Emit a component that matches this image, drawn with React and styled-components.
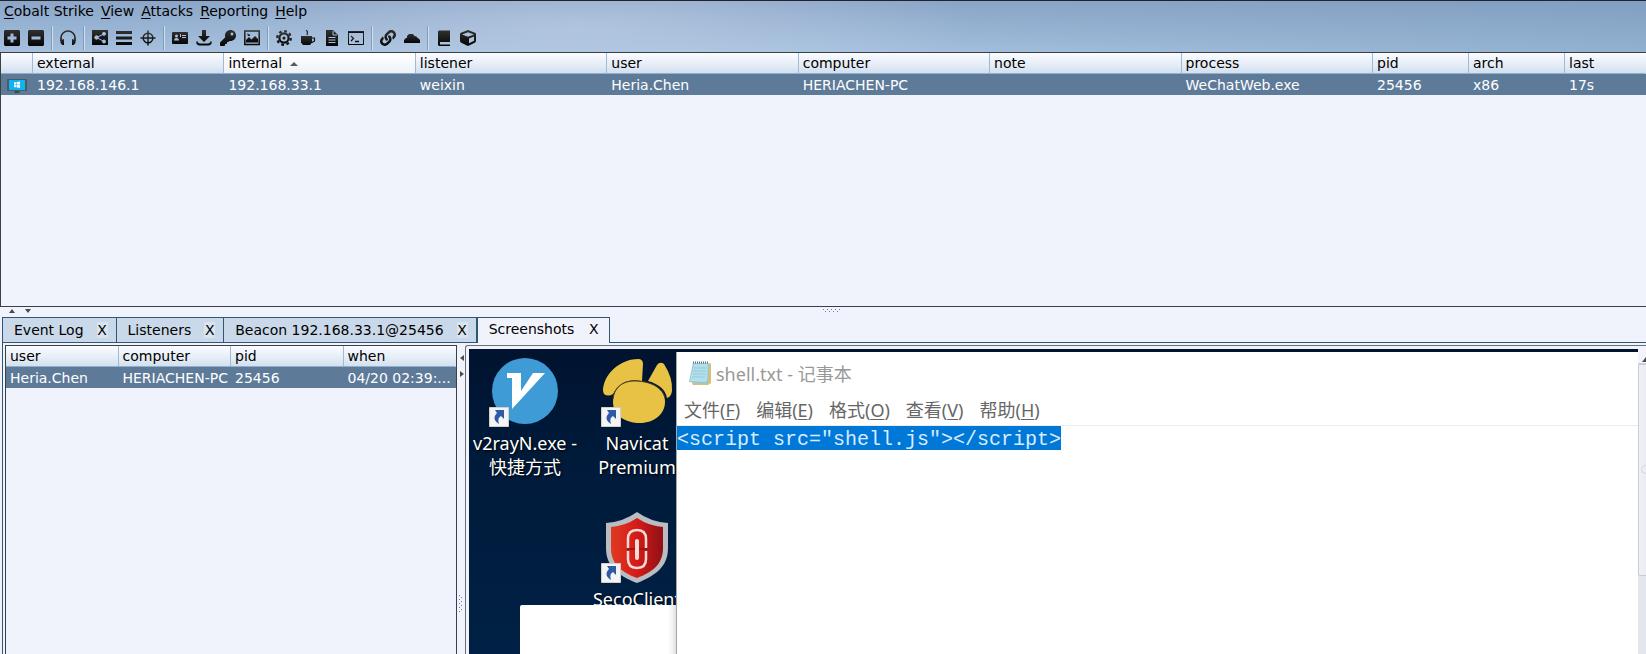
import React from "react";
import styled, { createGlobalStyle } from "styled-components";
import { FaKey, FaLink, FaCube } from "react-icons/fa";

const Global = createGlobalStyle`
  *, *::before, *::after { box-sizing: border-box; }
  html, body { margin: 0; padding: 0; }
  body, button { font-family: "DejaVu Sans", sans-serif; font-size: 14px; color: #000; }
  button { border: 0; padding: 0; margin: 0; background: none; cursor: pointer; }
`;

const Shell = styled.div`
  display: grid;
  grid-template-rows: auto minmax(0, 255fr) 10px minmax(0, 337fr);
  grid-template-columns: minmax(0, 1fr);
  height: 100vh;
  overflow: hidden;
  background: #f0f3fb;
`;

const Banner = styled.header`
  border-top: 1px solid #23232b;
  background:
    radial-gradient(ellipse 24% 150% at 35% 50%, rgba(200, 212, 232, 0.5), rgba(200, 212, 232, 0)),
    linear-gradient(90deg, rgba(110, 145, 180, 0) 50%, rgba(110, 145, 180, 0.35) 100%),
    linear-gradient(180deg, #8ba6c8 0%, #a5c1de 100%);
`;

const MenuBar = styled.nav`
  display: flex;
  align-items: flex-start;
  gap: 7px;
  height: 23px;
  padding: 0 4px;
`;

const MenuButton = styled.button`
  line-height: 21px;
`;

const Mnemonic = styled.span`
  text-decoration: underline;
  text-underline-offset: 2px;
`;

const ToolBar = styled.div`
  display: flex;
  align-items: center;
  height: 28px;
`;

const ToolButton = styled.button`
  display: grid;
  place-items: center;
  width: 24px;
  height: 24px;
  svg { width: 16px; height: 16px; }
`;

const ToolSeparator = styled.span`
  width: 8px;
  height: 24px;
  background: linear-gradient(90deg, #7f9bbb, #7f9bbb 50%, #d3e0ee 50%) center / 2px 100% no-repeat;
`;

const TablePane = styled.div`
  overflow: hidden;
  border: solid #3c3f44;
  border-width: ${(p) => (p.$inner ? "1px 1px 0" : "1px 0 1px 1px")};
`;

const Grid = styled.table`
  width: 100%;
  table-layout: fixed;
  border-collapse: separate;
  border-spacing: 0;
`;

const HeadCell = styled.th`
  height: 21px;
  padding: 0 4px;
  text-align: left;
  font-weight: normal;
  line-height: 20px;
  white-space: nowrap;
  border-right: 1px solid #9dbbd9;
  border-bottom: 1px solid #8fafcd;
  background: ${(p) =>
    p.$sorted
      ? "linear-gradient(#ffffff, #eef3f9)"
      : "linear-gradient(#fafcff 0%, #e9eff8 50%, #d3e0ee 100%)"};
  &:last-child { border-right-color: transparent; }
`;

const SortMark = styled.span`
  display: inline-block;
  margin-left: 8px;
  vertical-align: middle;
  border: solid transparent;
  border-width: 0 4px 4px;
  border-bottom-color: #555b64;
`;

const Cell = styled.td`
  height: 21px;
  padding: 2px 4px 0;
  line-height: 19px;
  color: #fff;
  background: #5e7a99;
  white-space: nowrap;
  svg { display: block; margin: 0 auto; }
`;

const SplitBar = styled.div`
  position: relative;
  display: flex;
  flex-direction: ${(p) => (p.$vertical ? "column" : "row")};
  align-items: flex-start;
  gap: 8px;
  padding: ${(p) => (p.$vertical ? "9px 1px" : "0 8px")};
`;

const Arrow = styled.button`
  display: block;
  width: 8px;
  height: 8px;
  svg { display: block; }
`;

const Grip = styled.svg`
  position: absolute;
  left: ${(p) => (p.$vertical ? "2px" : "50%")};
  top: ${(p) => (p.$vertical ? "81%" : "2px")};
`;

const Workspace = styled.section`
  display: flex;
  flex-direction: column;
  min-width: 0;
  padding-left: 2px;
`;

const TabStrip = styled.div`
  display: flex;
  height: 26px;
  border-left: 1px solid #2f5577;
  &::after {
    content: "";
    flex: 1;
    border-bottom: 1px solid #2f5577;
  }
`;

const Tab = styled.div`
  display: flex;
  align-items: center;
  gap: ${(p) => (p.$active ? "14px" : "13px")};
  padding: ${(p) => (p.$active ? "0 10px 4px 11px" : "0 8px 0 11px")};
  border: solid #2f5577;
  border-width: ${(p) => (p.$active ? "1px 1px 0 1px" : "1px 1px 1px 0")};
  background: ${(p) => (p.$active ? "#f0f3fb" : "#cad9e9")};
`;

const TabTitle = styled.button`
  line-height: 20px;
  white-space: nowrap;
`;

const TabClose = styled.button`
  width: 11px;
  line-height: 16px;
  background: ${(p) => (p.$active ? "transparent" : "#dae4ef")};
`;

const Panels = styled.div`
  flex: 1;
  min-height: 0;
  display: grid;
  grid-template-columns: minmax(0, 452fr) 8px minmax(0, 1181fr);
  padding: 2px 0 0 2px;
  border-left: 1px solid #2f5577;
`;

const Viewer = styled.div`
  display: grid;
  grid-template-columns: minmax(0, 1fr) 8px;
  padding: 3px 0 0 3px;
  border: solid #6b6e75;
  border-width: 1px 0 0 1px;
  border-radius: 3px 0 0 0;
  min-height: 0;
`;

const Desktop = styled.div`
  position: relative;
  overflow: hidden;
  background: linear-gradient(180deg, #00132f 0%, #001a3a 35%, #002145 100%);
  font-family: "Noto Sans", "Noto Sans CJK SC", sans-serif;
`;

const Shortcuts = styled.div`
  display: grid;
  grid-template-columns: repeat(2, 112px);
  grid-auto-rows: 156px;
  padding-top: 7px;
`;

const Shortcut = styled.div`
  display: flex;
  flex-direction: column;
  align-items: center;
  gap: 3px;
  grid-column: ${(p) => p.$column};
`;

const ShortcutLabel = styled.span`
  font-size: 18px;
  line-height: 24px;
  text-align: center;
  white-space: pre;
  color: #fff;
  text-shadow: 1px 1px 2px #000;
`;

const BlankWindow = styled.div`
  position: absolute;
  left: 51px;
  top: 256px;
  bottom: 0;
  width: 157px;
  border-radius: 2px 0 0 0;
  background: linear-gradient(270deg, #dadada 0, #f4f4f4 5px, #fff 10px);
`;

const Notepad = styled.div`
  position: absolute;
  left: 207px;
  top: 3px;
  right: 0;
  bottom: 0;
  background: #fff;
  border-left: 1px solid #a4a8ac;
`;

const NotepadTitle = styled.div`
  display: flex;
  align-items: center;
  gap: 4px;
  height: 42px;
  padding-left: 11px;
  font-size: 18px;
  color: #999;
`;

const NotepadMenu = styled.div`
  display: flex;
  gap: 16px;
  height: 32px;
  padding-left: 7px;
  border-bottom: 1px solid #ececec;
`;

const NotepadMenuButton = styled.button`
  font-family: "Noto Sans", "Noto Sans CJK SC", sans-serif;
  font-size: 18px;
  line-height: 32px;
  color: #666;
  white-space: nowrap;
`;

const Source = styled.code`
  display: block;
  width: max-content;
  padding-top: 4px;
  font-family: "Liberation Mono", monospace;
  font-size: 20px;
  line-height: 20px;
  color: #d9ecff;
  background: #0078d7;
`;

const ScrollTrack = styled.div`
  display: flex;
  flex-direction: column;
  overflow: hidden;
  background: #e4e6ed;
`;

const ScrollUp = styled.button`
  flex: none;
  height: 15px;
  padding-left: 4px;
  background: #f3f4f9;
  border-bottom: 1px solid #d0d2da;
`;

const ScrollThumb = styled.div`
  position: relative;
  flex: 0 1 212px;
  width: 15px;
  border: 1px solid #c9cbd3;
  border-radius: 2px;
  background: linear-gradient(90deg, #f0f1f6, #e8e9ef);
  &::after {
    content: "";
    position: absolute;
    left: 2px;
    top: 100px;
    width: 9px;
    height: 9px;
    border: 1px solid #d5d6dc;
    border-radius: 50%;
  }
`;

const ink = "url(#ink)";
const line = { fill: "none", stroke: ink };
const art = {
  add: <path fillRule="evenodd" d="M1 0h14l1 1v14l-1 1H1l-1-1V1zM6.500 3.500v3h-3v3h3v3h3v-3h3v-3h-3v-3z" />,
  remove: <path fillRule="evenodd" d="M1 0h14l1 1v14l-1 1H1l-1-1V1zM3.500 6.500v3h9v-3z" />,
  headphones: (
    <>
      <path d="M1 11V8a7 7 0 0 1 14 0v3" {...line} strokeWidth="1.500" />
      <path d="M.5 10 4 9v6L2.500 15 .5 13zM15.500 10 12 9v6l1.500 0 2-2z" />
    </>
  ),
  graph: (
    <>
      <rect x="0" y="0" width="16" height="15" />
      <g fill="#a5bfdc" stroke="#a5bfdc">
        <circle cx="4.500" cy="7.500" r="1.700" />
        <circle cx="12" cy="3.800" r="1.500" />
        <circle cx="12" cy="11.500" r="1.500" />
        <path d="m12 4-7.500 3.500L12 11.500" fill="none" />
      </g>
    </>
  ),
  list: <path d="M0 1h16v3H0zm0 5.500h16v3H0zM0 12h16v3H0z" />,
  target: (
    <g {...line} strokeWidth="1.400">
      <circle cx="8" cy="8" r="4.800" />
      <path d="M8 .5v15M.5 8h15" />
    </g>
  ),
  card: (
    <>
      <rect y="2" width="16" height="12" rx="1" />
      <g fill="#a5bfdc">
        <circle cx="4.500" cy="6" r="1.500" />
        <path d="M2 10.500q0-2.500 2.500-2.500T7 10.500zM8 4h1v3H8zM10 5h4v1h-4zM10 7h4v1h-4z" />
      </g>
    </>
  ),
  download: (
    <>
      <path d="M6 0h4v6h4l-6 6-6-6h4z" />
      <path d="M1 11.500c0 2 1 3 3 3h8c2 0 3-1 3-3" {...line} strokeWidth="1.800" />
    </>
  ),
  image: (
    <>
      <rect x=".8" y="1" width="14.400" height="13.500" {...line} strokeWidth="1.500" />
      <path d="M2 12.500V10l3-3 2.500 2.500L11 6l3 3v3.500zM3 3.500l3 1v1.500H4z" />
    </>
  ),
  gear: (
    <>
      <circle cx="8" cy="8" r="4.600" {...line} strokeWidth="2.200" />
      <circle cx="8" cy="8" r="6.800" {...line} strokeWidth="2.200" strokeDasharray="2.670 2.670" />
      <circle cx="8" cy="8" r="1.500" />
    </>
  ),
  cup: (
    <>
      <path d="M1 6h11v6.500L10 15H3l-2-2.500z" />
      <path d="M12 8h2.500v3L12 12.500M7.500 5c-1-2 0-2 0-3S6.500 1.500 6.500 0" {...line} strokeWidth="1.200" />
    </>
  ),
  file: (
    <>
      <path d="M2 0h7l5 5v11H2z" />
      <path d="M9 1v4h4M4.500 7.500h7M4.500 10h7M4.500 12.500h7" fill="none" stroke="#a5bfdc" />
    </>
  ),
  terminal: (
    <>
      <path d="M.5 1.500h15v13H.5z" {...line} />
      <path d="M0 1h16v2H0z" />
      <path d="m3 6 2.500 2.500L3 11M7 11.500h4" {...line} strokeWidth="1.300" />
    </>
  ),
  cloud: <path d="M0 13v-3l2-2h1V6l2-2h4l1.500 2 2 .5 1 1.500h.5l2 2v3z" />,
  book: (
    <>
      <path d="M3 .5h11V12H4v2.500h10V16H3l-1-1V1.500z" />
      <path d="M4.500 13h9" {...line} strokeWidth=".7" />
    </>
  ),
};

const tools = [
  ["add", "remove"],
  ["headphones"],
  ["graph", "list", "target"],
  ["card", "download", "key", "image"],
  ["gear", "cup", "file", "terminal"],
  ["link", "cloud"],
  ["book", "cube"],
];
const packIcons = { key: FaKey, link: FaLink, cube: FaCube };

function ToolIcon({ name }) {
  const Pack = packIcons[name];
  if (Pack) return <Pack fill={ink} color="#111" />;
  return <svg viewBox="0 0 16 16" fill={ink}>{art[name]}</svg>;
}

const Defs = styled.svg`
  position: absolute;
`;

function InkGradient() {
  return (
    <Defs width="0" height="0" aria-hidden="true">
      <linearGradient id="ink" x1="0" y1="0" x2="0" y2="1">
        <stop offset="0" stopColor="#303030" />
        <stop offset="1" stopColor="#050505" />
      </linearGradient>
    </Defs>
  );
}

const arrowPaths = {
  up: "M1 6h6L4 2z",
  down: "M1 2h6L4 6z",
  left: "M6 1v6L2 4z",
  right: "M2 1v6l4-3z",
};
const ArrowButton = ({ dir }) => (
  <Arrow aria-label={`Move divider ${dir}`}>
    <svg width="8" height="8"><path d={arrowPaths[dir]} fill="#4a4a4a" /></svg>
  </Arrow>
);

const GripDots = ({ vertical }) => (
  <Grip $vertical={vertical} width={vertical ? 4 : 18} height={vertical ? 18 : 4}>
    {[0, 1, 2, 3, 4, 5, 6, 7, 8].map((i) => {
      const along = i * 2;
      const across = (i % 2) * 2;
      return (
        <rect key={i} x={vertical ? across : along} y={vertical ? along : across}
          width="1" height="1" fill="#6c84a4" />
      );
    })}
  </Grip>
);

const BeaconIcon = () => (
  <svg width="20" height="16" viewBox="0 0 20 16" aria-label="Windows session">
    <path d="M0 1h20v12H0z" fill="#4c5a66" />
    <path d="M2 2h16v10H2z" fill="#10b4f1" />
    <path d="m7 4.500 2.500-.5v2.500H7zM10 4l3-.5v3h-3zM7 7h2.500v2.500L7 9zM10 7h3v3l-3-.5z" fill="#fff" />
    <path d="M8 13h4l1 2H7z" fill="#3b4650" />
  </svg>
);

const Badge = () => (
  <g>
    <path d="M.5 51.500h19v19H.5z" fill="#f4f4f4" stroke="#d0cfcc" />
    <path d="M6 54h9v9l-3-3c-3 2-3 4-2 8-5-3-6-7-2-11z" fill="#2c5ca6" />
  </g>
);

const V2rayArt = () => (
  <>
    <circle cx="36" cy="35" r="33" fill="#3f9bd6" />
    <path d="M18 17h14v18L44 17h12L23 53V22h-5z" fill="#fff" />
  </>
);

const NavicatArt = () => (
  <g fill="#e8c244">
    <path d="M3 38Q1 34 3 28C7 14 22 3 37 3q5 0 5 5l-1 17q-10-2-17 1-8 4-12 12-5 3-9 0z" />
    <path d="M47 25 56 9q3-4 7-1 9 14 8 27-1 6-5 7-2-12-19-17z" />
    <path d="M12 46C12 33 21 25 33 25c18 0 31 8 31 21C64 58 53 67 39 67 24 67 12 59 12 46z" />
    <path d="M12 43c1-12 10-18 21-18 17 0 29 7 31 17" fill="none" stroke="#4b421f" />
  </g>
);

const SecoArt = () => (
  <>
    <defs>
      <linearGradient id="shield">
        <stop offset="0" stopColor="#df3a22" />
        <stop offset=".5" stopColor="#d51a18" />
        <stop offset="1" stopColor="#8f1115" />
      </linearGradient>
    </defs>
    <path d="M36 0q14 10 31 11v25c0 19-13 28-31 35C18 64 5 55 5 36V11Q22 10 36 0z" fill="#b9bcc0" />
    <path d="M36 6q12 8 26 9v21c0 16-10 24-26 30C20 60 10 52 10 36V15q14-1 26-9z" fill="url(#shield)" />
    <g fill="none" stroke="#f5dcd6" strokeWidth="2.500">
      <path d="M27 36v-9q0-9 9-9t9 9v9M27 39v8q0 9 9 9t9-9v-8" />
      <rect x="34" y="27" width="4" height="21" rx="2" fill="#f5dcd6" strokeWidth="0" />
    </g>
    <path d="M26 37h8m4 0h8" stroke="#a01616" strokeWidth="2" />
  </>
);

const shortcuts = [
  { label: "v2rayN.exe -\n快捷方式", column: 1, Art: V2rayArt },
  { label: "Navicat\nPremium", column: 2, Art: NavicatArt },
  { label: "SecoClient", column: 2, Art: SecoArt },
];

const NoteIcon = () => (
  <svg width="24" height="24" viewBox="0 0 24 24">
    <path d="M20 3l3-1v20l-3 2H5l-1-2z" fill="#d5bd7b" />
    <path d="M5 2h16l-1 19-3 2-16-2z" fill="#8fc9da" />
    <path d="M6 3h14l-1 17-2 1-15-1z" fill="#b2dfea" />
    <path d="M6 7h13M5 10h13M5 13h13M4 16h13" stroke="#93cbdc" />
    <path d="M5 1.500h16" stroke="#59717a" strokeWidth="2" strokeDasharray="1 1" />
  </svg>
);

const menus = ["Cobalt Strike", "View", "Attacks", "Reporting", "Help"];
const noteMenus = [["文件", "F"], ["编辑", "E"], ["格式", "O"], ["查看", "V"], ["帮助", "H"]];
const tabs = ["Event Log", "Listeners", "Beacon 192.168.33.1@25456", "Screenshots"];

const sessionColumns = [
  { name: "external", value: "192.168.146.1" },
  { name: "internal", value: "192.168.33.1", sorted: true },
  { name: "listener", value: "weixin" },
  { name: "user", value: "Heria.Chen" },
  { name: "computer", value: "HERIACHEN-PC" },
  { name: "note", value: "" },
  { name: "process", value: "WeChatWeb.exe" },
  { name: "pid", value: "25456", width: 96 },
  { name: "arch", value: "x86", width: 96 },
  { name: "last", value: "17s", width: 81 },
];

const shotColumns = [
  { name: "user", value: "Heria.Chen" },
  { name: "computer", value: "HERIACHEN-PC" },
  { name: "pid", value: "25456" },
  { name: "when", value: "04/20 02:39:..." },
];

function DataTable({ columns, icon }) {
  return (
    <Grid>
      <colgroup>
        {icon && <col width="32" />}
        {columns.map((c) => <col key={c.name} width={c.width} />)}
      </colgroup>
      <thead>
        <tr>
          {icon && <HeadCell />}
          {columns.map((c) => (
            <HeadCell key={c.name} $sorted={c.sorted}>{c.name}{c.sorted && <SortMark />}</HeadCell>
          ))}
        </tr>
      </thead>
      <tbody>
        <tr>
          {icon && <Cell>{icon}</Cell>}
          {columns.map((c) => <Cell key={c.name}>{c.value}</Cell>)}
        </tr>
      </tbody>
    </Grid>
  );
}

export default function App() {
  return (
    <Shell>
      <Global />
      <Banner>
        <InkGradient />
        <MenuBar>
          {menus.map((m) => (
            <MenuButton key={m}><Mnemonic>{m[0]}</Mnemonic>{m.slice(1)}</MenuButton>
          ))}
        </MenuBar>
        <ToolBar>
          {tools.map((group, i) => (
            <React.Fragment key={i}>
              {i > 0 && <ToolSeparator />}
              {group.map((name) => (
                <ToolButton key={name} aria-label={name}><ToolIcon name={name} /></ToolButton>
              ))}
            </React.Fragment>
          ))}
        </ToolBar>
      </Banner>

      <TablePane>
        <DataTable columns={sessionColumns} icon={<BeaconIcon />} />
      </TablePane>

      <SplitBar>
        <ArrowButton dir="up" />
        <ArrowButton dir="down" />
        <GripDots />
      </SplitBar>

      <Workspace>
        <TabStrip>
          {tabs.map((t, i) => (
            <Tab key={t} $active={i === 3}>
              <TabTitle>{t}</TabTitle>
              <TabClose $active={i === 3} aria-label={`Close ${t}`}>X</TabClose>
            </Tab>
          ))}
        </TabStrip>
        <Panels>
          <TablePane $inner>
            <DataTable columns={shotColumns} />
          </TablePane>
          <SplitBar $vertical>
            <ArrowButton dir="left" />
            <ArrowButton dir="right" />
            <GripDots vertical />
          </SplitBar>
          <Viewer>
            <Desktop>
              <Shortcuts>
                {shortcuts.map(({ label, column, Art }) => (
                  <Shortcut key={label} $column={column}>
                    <svg width="72" height="72"><Art /><Badge /></svg>
                    <ShortcutLabel>{label}</ShortcutLabel>
                  </Shortcut>
                ))}
              </Shortcuts>
              <BlankWindow />
              <Notepad>
                <NotepadTitle><NoteIcon />shell.txt - 记事本</NotepadTitle>
                <NotepadMenu>
                  {noteMenus.map(([text, key]) => (
                    <NotepadMenuButton key={key}>{text}(<Mnemonic>{key}</Mnemonic>)</NotepadMenuButton>
                  ))}
                </NotepadMenu>
                <Source>{'<script src="shell.js"></script>'}</Source>
              </Notepad>
            </Desktop>
            <ScrollTrack>
              <ScrollUp aria-label="Scroll up">
                <svg width="8" height="5"><path d="M0 5h8L4 0z" fill="#4a4a4a" /></svg>
              </ScrollUp>
              <ScrollThumb />
            </ScrollTrack>
          </Viewer>
        </Panels>
      </Workspace>
    </Shell>
  );
}
